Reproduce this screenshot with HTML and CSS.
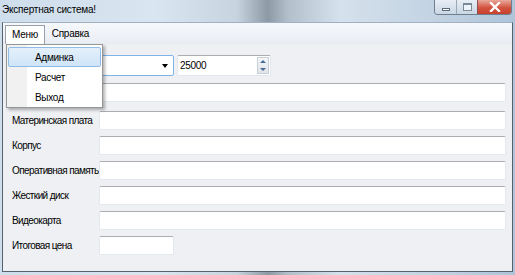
FILE: index.html
```html
<!DOCTYPE html>
<html>
  <head>
    <title>Экспертная система!</title>
    <link rel="stylesheet" href="styles.css">
  </head>
  <body>
    <div id="window">
      <div id="titlebar">
        <div id="titlebar-title">Экспертная система!</div>
        <div class="caption-buttons">
          <div class="caption-btn min-btn"><span class="min-glyph"></span></div>
          <div class="caption-btn max-btn"><span class="max-glyph"></span></div>
          <div class="caption-btn close-btn">
            <svg width="12" height="10" viewBox="0 0 12 10">
              <path d="M2 1 L10 9 M10 1 L2 9" stroke="#fff" stroke-width="2.4" stroke-linecap="square"/>
            </svg>
          </div>
        </div>
      </div>
      <div id="client">
        <div class="menubar">
          <div class="menu-item open">Меню</div>
          <div class="menu-item">Справка</div>
        </div>
        <div class="form">
          <div class="row row-top">
            <div class="label"></div>
            <div class="top-controls">
              <div class="combo">
                <span class="combo-arrow"></span>
              </div>
              <div class="numeric">
                <span class="numeric-value">25000</span>
                <div class="spin">
                  <span class="spin-up"></span>
                  <span class="spin-down"></span>
                </div>
              </div>
            </div>
          </div>
          <div class="row row-first">
            <div class="label"></div>
            <div class="textbox"></div>
          </div>
          <div class="row row-second">
            <div class="label">Материнская плата</div>
            <div class="textbox"></div>
          </div>
          <div class="row">
            <div class="label">Корпус</div>
            <div class="textbox"></div>
          </div>
          <div class="row">
            <div class="label">Оперативная память</div>
            <div class="textbox"></div>
          </div>
          <div class="row">
            <div class="label">Жесткий диск</div>
            <div class="textbox"></div>
          </div>
          <div class="row">
            <div class="label">Видеокарта</div>
            <div class="textbox"></div>
          </div>
          <div class="row">
            <div class="label">Итоговая цена</div>
            <div class="textbox short"></div>
          </div>
        </div>
        <div class="dropdown">
          <div class="dropdown-item active">Админка</div>
          <div class="dropdown-item">Расчет</div>
          <div class="dropdown-item">Выход</div>
        </div>
      </div>
    </div>
  </body>
</html>
```

FILE: styles.css
```css
* {
  margin: 0;
  padding: 0;
  box-sizing: border-box;
}

body {
  font-family: "Liberation Sans", Arial, sans-serif;
  font-size: 10px;
  letter-spacing: -0.3px;
  color: #000;
  background-color: #b9d1ea;
}

#window {
  width: 515px;
  height: 275px;
  display: flex;
  flex-direction: column;
  background: linear-gradient(90deg, #cfdeec 0%, #d9e5f0 30%, #c7d3de 46%,
    #8d99a5 52%, #b3c0cc 56%, #d5e1ec 66%, #c2d2e2 85%, #aec4d9 100%);
}

#titlebar {
  height: 22px;
  display: flex;
  justify-content: space-between;
  padding-left: 2px;
}

#titlebar-title {
  line-height: 20px;
  letter-spacing: -0.2px;
}

.caption-buttons {
  display: flex;
  height: 15px;
  margin-right: 3px;
  border: 1px solid #6f7e8d;
  border-top: none;
  border-radius: 0 0 4px 4px;
  overflow: hidden;
}

.caption-btn {
  display: flex;
  align-items: center;
  justify-content: center;
  height: 100%;
}

.min-btn {
  width: 22px;
  background: linear-gradient(#e8eef5, #c9d6e3);
  border-right: 1px solid #9aa8b6;
}

.max-btn {
  width: 21px;
  background: linear-gradient(#e8eef5, #c9d6e3);
  border-right: 1px solid #8a5050;
}

.close-btn {
  width: 33px;
  background: linear-gradient(#e9a99c, #d2533f 55%, #c8402d);
}

.min-glyph {
  width: 8px;
  height: 3px;
  margin-top: 5px;
  background: #fff;
  border: 1px solid #5b6a79;
}

.max-glyph {
  width: 9px;
  height: 8px;
  border: 1px solid #7b8a99;
  border-top-width: 2px;
  background: #eef3f8;
}

#client {
  flex: 1;
  position: relative;
  margin: 0 2px 3px 2px;
  border: 1px solid #58626d;
  border-top-color: #9fb0c2;
  background-color: #eef0f3;
}

.menubar {
  height: 21px;
  display: flex;
  align-items: flex-end;
  padding-left: 2px;
  background: linear-gradient(#f6f8fb, #e9edf3);
}

.menu-item {
  height: 19px;
  line-height: 18px;
  padding: 0 7px;
}

.menu-item.open {
  background: #fff;
  border: 1px solid #97a0ab;
  border-bottom: none;
  padding: 0 6px;
}

.form {
  display: flex;
  flex-direction: column;
  gap: 6px;
  padding: 11px 6px 0 9px;
}

.row {
  display: flex;
  align-items: center;
  height: 19px;
}

.row-top {
  height: 21px;
}

.row-first {
  margin-top: 1px;
}

.row-second {
  margin-top: 3px;
}

.label {
  width: 87px;
  flex: none;
  white-space: nowrap;
  letter-spacing: -0.6px;
}

.textbox {
  flex: 1;
  height: 19px;
  background: #fff;
  border: 1px solid #e2e8ee;
  border-top-color: #abadb3;
  border-radius: 2px;
}

.textbox.short {
  flex: none;
  width: 75px;
}

.top-controls {
  display: flex;
  gap: 3px;
}

.combo {
  width: 75px;
  height: 21px;
  display: flex;
  align-items: center;
  justify-content: flex-end;
  padding-right: 5px;
  background: #fff;
  border: 1px solid #7eb4ea;
  border-radius: 2px;
}

.combo-arrow {
  border-left: 3px solid transparent;
  border-right: 3px solid transparent;
  border-top: 4px solid #000;
}

.numeric {
  width: 94px;
  height: 21px;
  display: flex;
  align-items: center;
  justify-content: space-between;
  padding: 0 1px 0 2px;
  background: #fff;
  border: 1px solid #e2e8ee;
  border-top-color: #abadb3;
  border-radius: 2px;
}

.spin {
  width: 12px;
  height: 17px;
  display: flex;
  flex-direction: column;
  align-items: center;
  justify-content: space-around;
  background: linear-gradient(#f4f6f8, #dfe4ea);
  border: 1px solid #c7cfd8;
}

.spin-up {
  border-left: 3px solid transparent;
  border-right: 3px solid transparent;
  border-bottom: 3px solid #4a6d95;
}

.spin-down {
  border-left: 3px solid transparent;
  border-right: 3px solid transparent;
  border-top: 3px solid #4a6d95;
}

.dropdown {
  position: absolute;
  left: 3px;
  top: 21px;
  width: 97px;
  height: 64px;
  padding: 2px 1px;
  background: linear-gradient(90deg, #f1f1f1 0, #f1f1f1 20px, #fff 20px);
  border: 1px solid #979797;
  box-shadow: 2px 2px 3px rgba(0, 0, 0, 0.3);
}

.dropdown-item {
  height: 20px;
  line-height: 20px;
  padding-left: 26px;
  border: 1px solid transparent;
}

.dropdown-item.active {
  background: linear-gradient(#e4f0fb, #cfe4f7);
  border-color: #8fbbe6;
  border-radius: 2px;
}
```
